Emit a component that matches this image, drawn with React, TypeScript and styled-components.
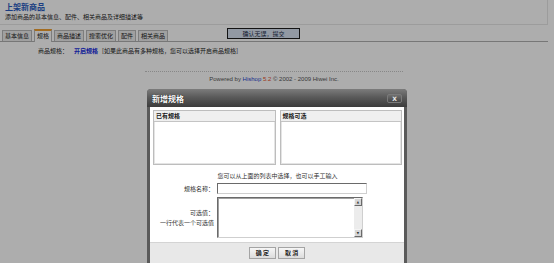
import React from 'react';
import styled, {createGlobalStyle} from 'styled-components';

const GlobalStyle = createGlobalStyle`
  html, body {
    margin: 0;
    padding: 0;
    overflow: hidden;
    background: #ffffff;
    font-family: "Noto Sans CJK SC", "DejaVu Sans", sans-serif;
  }
`

const tabs = ['基本信息', '规格', '商品描述', '搜索优化', '配件', '相关商品'];

export default function App() {
    return (
        <>
            <GlobalStyle/>
            <Page>
                <Header>
                    <Title>上架新商品</Title>
                    <Subtitle>添加商品的基本信息、配件、相关商品及详细描述等</Subtitle>
                </Header>
                <TabBar>
                    {tabs.map(t => (
                        <Tab key={t} $active={t === '规格'}>{t}</Tab>
                    ))}
                    <SubmitButton>确认无误，提交</SubmitButton>
                </TabBar>
                <SpecRow>
                    <span>商品规格：</span>
                    <SpecLink>开启规格</SpecLink>
                    <span>[如果此商品有多种规格，您可以选择开启商品规格]</span>
                </SpecRow>
                <Footer>
                    Powered by <Brand>Hishop</Brand> <Version>5.2</Version> © 2002 - 2009 Hiwei Inc.
                </Footer>
            </Page>

            <Overlay/>

            <Dialog>
                <DialogHeader>
                    <DialogTitle>新增规格</DialogTitle>
                    <CloseButton>X</CloseButton>
                </DialogHeader>
                <DialogBody>
                    <Lists>
                        <ListBox>
                            <ListHead>已有规格</ListHead>
                        </ListBox>
                        <ListBox>
                            <ListHead>规格可选</ListHead>
                        </ListBox>
                    </Lists>
                    <Hint>您可以从上面的列表中选择，也可以手工输入</Hint>
                    <FormRow>
                        <Label>规格名称：</Label>
                        <TextInput type="text"/>
                    </FormRow>
                    <FormRow>
                        <Label>可选值：<br/>一行代表一个可选值</Label>
                        <AreaField>
                            <Area/>
                            <ScrollTrack>
                                <ScrollArrow>▲</ScrollArrow>
                                <ScrollArrow>▼</ScrollArrow>
                            </ScrollTrack>
                        </AreaField>
                    </FormRow>
                </DialogBody>
                <DialogFooter>
                    <DialogButton>确 定</DialogButton>
                    <DialogButton>取 消</DialogButton>
                </DialogFooter>
            </Dialog>
        </>
    );
}

const Page = styled.div`
  width: 548px;
  font-size: 6px;
  color: #333;
`
const Header = styled.div`
  height: 25px;
  box-sizing: border-box;
  padding: 2px 5px 0;
  border-right: 1px solid #e6e6e6;
  border-bottom: 1px solid #e6e6e6;
`
const Title = styled.div`
  font-size: 8px;
  line-height: 10px;
  font-weight: 700;
  color: #2a5cc0;
`
const Subtitle = styled.div`
  margin-top: 1px;
  font-size: 6px;
  line-height: 8px;
  color: #222;
`
const TabBar = styled.div`
  margin-top: 3px;
  height: 13px;
  display: flex;
  align-items: flex-end;
  gap: 2px;
  padding-left: 2px;
  border-bottom: 1px solid #b0b0b0;
`
const Tab = styled.div<{ $active?: boolean }>`
  height: ${p => p.$active ? '13px' : '11px'};
  box-sizing: border-box;
  padding: 0 2px;
  margin-bottom: ${p => p.$active ? '-1px' : '0'};
  border: 1px solid #b8b8b8;
  border-bottom: none;
  border-top: ${p => p.$active ? '2px solid #f0a030' : '1px solid #b8b8b8'};
  background: ${p => p.$active ? '#ffffff' : '#ececec'};
  font-size: 6px;
  line-height: 10px;
  color: #222;
  white-space: nowrap;
`
const SubmitButton = styled.div`
  align-self: flex-start;
  margin-left: 57px;
  width: 73px;
  height: 11px;
  box-sizing: border-box;
  border: 1px solid #1e1e1e;
  background: #d8e2f0;
  font-size: 6px;
  line-height: 9px;
  text-align: center;
  color: #1c2c48;
`
const SpecRow = styled.div`
  height: 16px;
  padding-left: 38px;
  display: flex;
  align-items: center;
  gap: 4px;
  font-size: 6px;
  color: #222;
`
const SpecLink = styled.span`
  margin-left: 2px;
  color: #1a2ee0;
  font-weight: 700;
`
const Footer = styled.div`
  width: 258px;
  margin: 13px auto 0;
  padding-top: 3px;
  border-top: 1px dotted #c8c8c8;
  text-align: center;
  font-family: "Liberation Sans", Arial, sans-serif;
  font-size: 6px;
  line-height: 9px;
  color: #555;
`
const Brand = styled.span`
  color: #2b3fd0;
`
const Version = styled.span`
  color: #e8501e;
`
const Overlay = styled.div`
  position: fixed;
  inset: 0;
  background: rgba(0, 0, 0, 0.32);
`
const Dialog = styled.div`
  position: fixed;
  left: 147px;
  top: 89px;
  width: 260px;
  box-sizing: border-box;
  padding: 0 3px 3px;
  background: #5a5a5a;
  border-radius: 4px 4px 0 0;
`
const DialogHeader = styled.div`
  height: 18px;
  margin: 0 -3px;
  padding: 0 5px 0 5px;
  display: flex;
  align-items: center;
  justify-content: space-between;
  border-radius: 4px 4px 0 0;
  background: linear-gradient(#7c7c7c, #5a5a5a 45%, #3c3c3c);
`
const DialogTitle = styled.span`
  font-size: 8px;
  font-weight: 700;
  color: #ffffff;
  text-shadow: 0 0 1px #000;
`
const CloseButton = styled.span`
  width: 15px;
  height: 9px;
  box-sizing: border-box;
  border: 1px solid #7a7a7a;
  border-radius: 2px;
  background: linear-gradient(#707070, #454545);
  font-family: "DejaVu Sans", sans-serif;
  font-size: 6px;
  font-weight: 700;
  line-height: 7px;
  text-align: center;
  color: #e8e8e8;
`
const DialogBody = styled.div`
  background: #ffffff;
  padding: 3px 2px 4px 3px;
`
const Lists = styled.div`
  display: grid;
  grid-template-columns: 1fr 1fr;
  gap: 4px;
`
const ListBox = styled.div`
  height: 55px;
  box-sizing: border-box;
  border: 1px solid #bdbdbd;
  box-shadow: inset 0 0 0 1px #e4e4e4;
`
const ListHead = styled.div`
  height: 11px;
  box-sizing: border-box;
  padding-left: 2px;
  border-bottom: 1px solid #c4c4c4;
  background: #efefef;
  font-size: 6px;
  font-weight: 700;
  line-height: 10px;
  color: #1a1a1a;
`
const Hint = styled.div`
  margin-top: 7px;
  font-size: 6px;
  line-height: 8px;
  text-align: center;
  color: #333;
`
const FormRow = styled.div`
  margin-top: 3px;
  display: grid;
  grid-template-columns: 61px auto;
  column-gap: 3px;
  align-items: center;
`
const Label = styled.div`
  font-size: 6px;
  line-height: 10px;
  text-align: right;
  color: #333;
`
const TextInput = styled.input`
  width: 150px;
  height: 11px;
  box-sizing: border-box;
  margin: 0;
  padding: 0;
  border: 1px solid;
  border-color: #6a6a6a #cfcfcf #cfcfcf #6a6a6a;
  background: #fff;
  outline: none;
`
const AreaField = styled.div`
  width: 146px;
  height: 41px;
  box-sizing: border-box;
  display: flex;
  border: 1px solid;
  border-color: #6a6a6a #cfcfcf #cfcfcf #6a6a6a;
  box-shadow: inset 1px 1px 0 #a0a0a0;
`
const Area = styled.textarea`
  flex: 1;
  min-width: 0;
  margin: 0;
  padding: 0;
  border: none;
  resize: none;
  outline: none;
  background: transparent;
`
const ScrollTrack = styled.div`
  width: 8px;
  display: flex;
  flex-direction: column;
  justify-content: space-between;
  background: #ececec;
`
const ScrollArrow = styled.div`
  height: 8px;
  box-sizing: border-box;
  border: 1px solid;
  border-color: #f4f4f4 #6a6a6a #6a6a6a #f4f4f4;
  background: #d6d6d6;
  font-family: "DejaVu Sans", sans-serif;
  font-size: 3px;
  line-height: 6px;
  text-align: center;
  color: #333;
`
const DialogFooter = styled.div`
  margin: 0;
  padding: 4px 0 6px;
  display: flex;
  justify-content: center;
  gap: 2px;
  border-top: 1px solid #d4d4d4;
  background: #e8e8e8;
`
const DialogButton = styled.div`
  height: 12px;
  box-sizing: border-box;
  padding: 0 6px;
  border: 1px solid #a4a4a4;
  background: linear-gradient(#f6f6f6, #dcdcdc);
  font-size: 6px;
  font-weight: 700;
  line-height: 10px;
  color: #222;
`
